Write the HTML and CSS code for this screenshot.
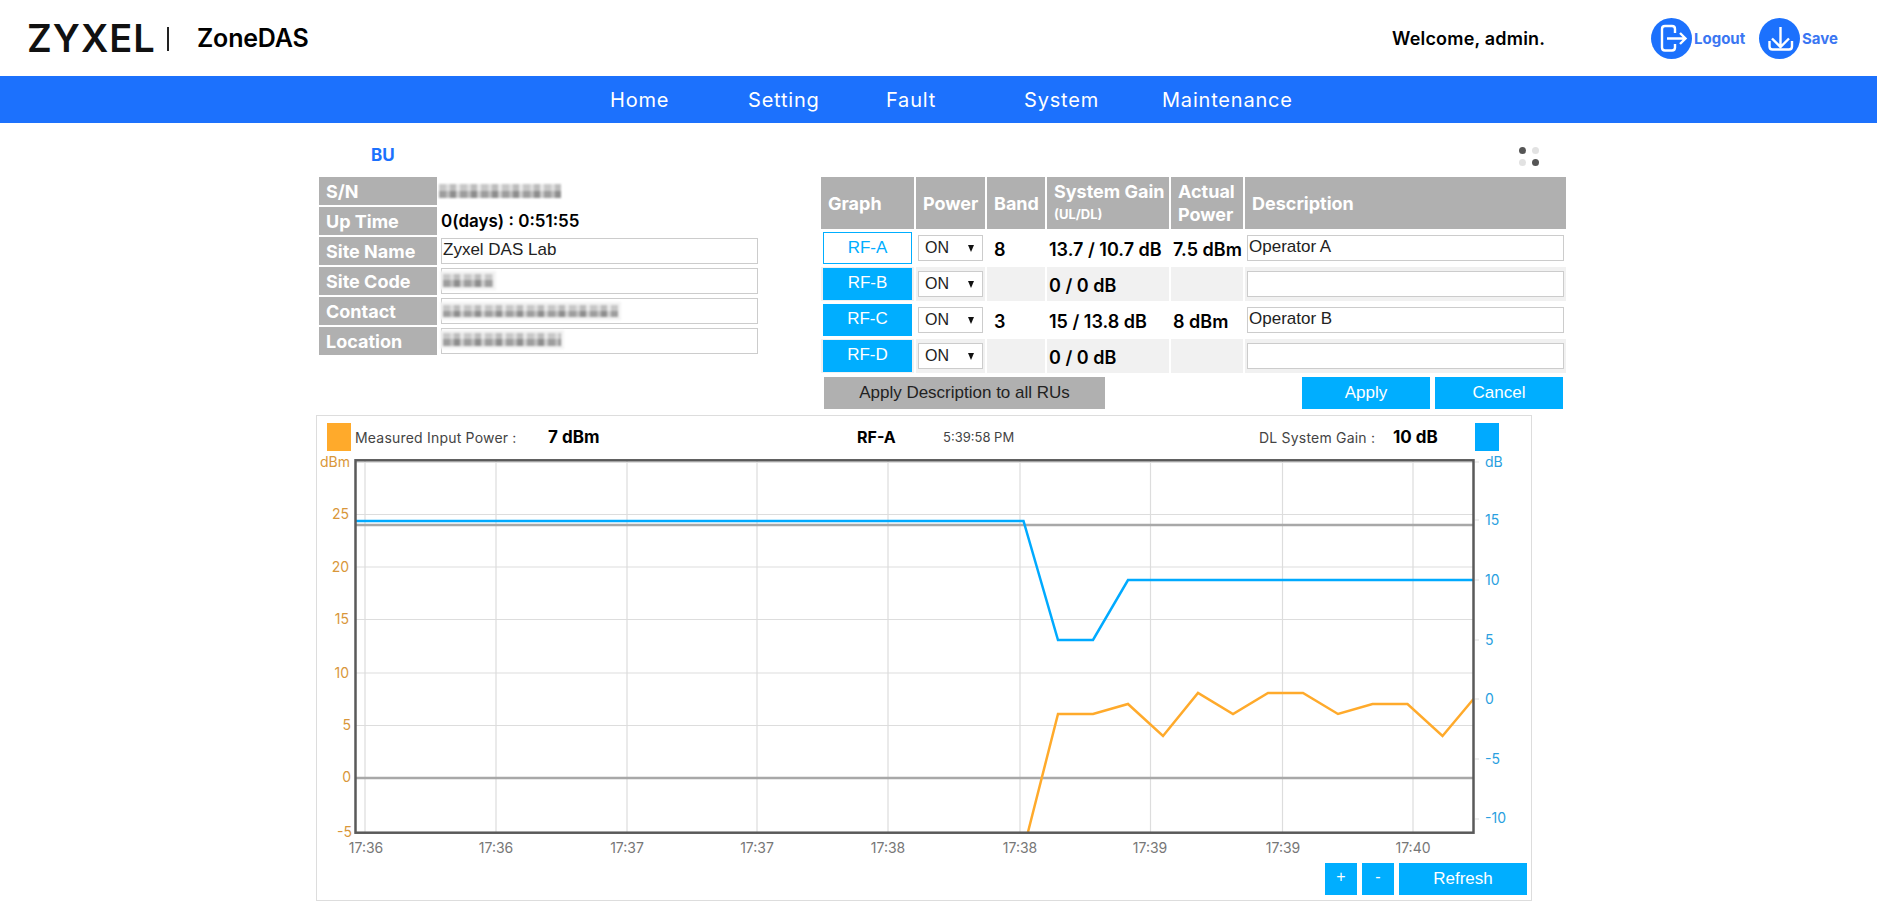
FILE: index.html
```html
<!DOCTYPE html>
<html lang="en">

<head>
    <meta charset="UTF-8">
    <title>ZoneDAS</title>
    <link rel="stylesheet" href="styles.css">
</head>

<body>
    <div class="top-header">
        <span class="logo-text">ZYXEL</span>
        <span class="logo-bar"></span>
        <span class="product-name">ZoneDAS</span>
        <span class="welcome">Welcome, admin.</span>
        <span class="head-icon">
            <svg width="41" height="41" viewBox="0 0 41 41">
                <circle cx="20.5" cy="20.5" r="20.5" fill="#1c71fd"/>
                <path d="M24 15V11q0-3-3-3H14q-3 0-3 3V29.500q0 3 3 3H21q3 0 3-3V26" fill="none" stroke="#fff" stroke-width="2.4"/>
                <path d="M16 20.500H34.500M29 15l5.500 5.500L29 26" fill="none" stroke="#fff" stroke-width="2.4"/>
            </svg>
        </span>
        <span class="head-link head-link-logout">Logout</span>
        <span class="head-icon">
            <svg width="41" height="41" viewBox="0 0 41 41">
                <circle cx="20.5" cy="20.500" r="20.5" fill="#1c71fd"/>
                <path d="M21.500 9V29M13 20.500l8.500 8.500 8.500-8.500" fill="none" stroke="#fff" stroke-width="2.4"/>
                <path d="M10.500 23v5.500q0 3 3 3H30q3 0 3-3V23" fill="none" stroke="#fff" stroke-width="2.4"/>
            </svg>
        </span>
        <span class="head-link">Save</span>
    </div>

    <div class="main-nav">
        <span class="nav-item">Home</span>
        <span class="nav-item">Setting</span>
        <span class="nav-item">Fault</span>
        <span class="nav-item">System</span>
        <span class="nav-item">Maintenance</span>
    </div>

    <div class="bu-title-row">
        <span class="bu-title">BU</span>
        <span class="dots">
            <i class="dot dot-dark"></i><i class="dot"></i>
            <i class="dot"></i><i class="dot dot-dark"></i>
        </span>
    </div>

    <div class="bu-top">
        <div class="info-list">
            <div class="info-row">
                <span class="info-label">S/N</span>
                <span class="mosaic mosaic-sn"></span>
            </div>
            <div class="info-row">
                <span class="info-label">Up Time</span>
                <span class="info-value">0(days) : 0:51:55</span>
            </div>
            <div class="info-row">
                <span class="info-label">Site Name</span>
                <span class="info-input">Zyxel DAS Lab</span>
            </div>
            <div class="info-row">
                <span class="info-label">Site Code</span>
                <span class="info-input"><span class="mosaic mosaic-code"></span></span>
            </div>
            <div class="info-row">
                <span class="info-label">Contact</span>
                <span class="info-input"><span class="mosaic mosaic-contact"></span></span>
            </div>
            <div class="info-row">
                <span class="info-label">Location</span>
                <span class="info-input"><span class="mosaic mosaic-location"></span></span>
            </div>
        </div>

        <div class="rf-panel">
            <table class="rf-table">
                <thead>
                    <tr>
                        <th class="col-graph">Graph</th>
                        <th class="col-power">Power</th>
                        <th class="col-band">Band</th>
                        <th class="col-gain">System Gain<small>(UL/DL)</small></th>
                        <th class="col-actual">Actual Power</th>
                        <th>Description</th>
                    </tr>
                </thead>
                <tbody>
                    <tr>
                        <td><span class="rf-btn rf-btn-active">RF-A</span></td>
                        <td><span class="power-select">ON<i class="caret"></i></span></td>
                        <td class="cell-text cell-band">8</td>
                        <td class="cell-text">13.7 / 10.7 dB</td>
                        <td class="cell-text">7.5 dBm</td>
                        <td><span class="desc-input">Operator A</span></td>
                    </tr>
                    <tr class="row-off">
                        <td><span class="rf-btn">RF-B</span></td>
                        <td><span class="power-select">ON<i class="caret"></i></span></td>
                        <td class="cell-text cell-band"></td>
                        <td class="cell-text">0 / 0 dB</td>
                        <td class="cell-text"></td>
                        <td><span class="desc-input"></span></td>
                    </tr>
                    <tr>
                        <td><span class="rf-btn">RF-C</span></td>
                        <td><span class="power-select">ON<i class="caret"></i></span></td>
                        <td class="cell-text cell-band">3</td>
                        <td class="cell-text">15 / 13.8 dB</td>
                        <td class="cell-text">8 dBm</td>
                        <td><span class="desc-input">Operator B</span></td>
                    </tr>
                    <tr class="row-off">
                        <td><span class="rf-btn">RF-D</span></td>
                        <td><span class="power-select">ON<i class="caret"></i></span></td>
                        <td class="cell-text cell-band"></td>
                        <td class="cell-text">0 / 0 dB</td>
                        <td class="cell-text"></td>
                        <td><span class="desc-input"></span></td>
                    </tr>
                </tbody>
            </table>
            <div class="rf-actions">
                <span class="btn btn-grey">Apply Description to all RUs</span>
                <span class="btn btn-apply">Apply</span>
                <span class="btn btn-apply">Cancel</span>
            </div>
        </div>
    </div>

    <div class="chart-card">
        <div class="legend-row">
            <i class="legend-square legend-orange"></i>
            <span class="legend-label legend-w-input">Measured Input Power :</span>
            <span class="legend-value legend-w-inval">7 dBm</span>
            <span class="legend-rf legend-w-rf">RF-A</span>
            <span class="legend-time legend-w-time">5:39:58 PM</span>
            <span class="legend-label legend-w-gain">DL System Gain :</span>
            <span class="legend-value legend-w-gainval">10 dB</span>
            <i class="legend-square legend-blue"></i>
        </div>

        <svg class="chart" width="1214" height="407" viewBox="317 450 1214 407">
            <g class="grid">
                <path d="M356 462.500H1473M356 514.500H1473M356 567H1473M356 619.500H1473M356 673H1473M356 725.500H1473"/>
                <path d="M365 460V832M496 460V832M627 460V832M757 460V832M888 460V832M1020 460V832M1150.500 460V832M1282.500 460V832M1413 460V832"/>
                <path d="M1475 462H1479M1475 520H1479M1475 580H1479M1475 640H1479M1475 699H1479M1475 759H1479M1475 819H1479"/>
            </g>
            <path class="ref-line" d="M356 525H1473M356 778H1473"/>
            <polyline class="line-blue" points="356,521 1023.500,521 1058,640 1093,640 1128,580 1473,580"/>
            <polyline class="line-orange" points="1028,832 1058,714 1093,714 1128,704 1163,736 1198,693 1233,714 1268,693 1303,693 1338,714 1372.500,704 1407.500,704 1442.500,736 1473.500,699"/>
            <rect class="frame" x="355.500" y="460.300" width="1118" height="372.400"/>

            <g class="axis-left">
                <text x="350" y="467">dBm</text>
                <text x="349" y="519">25</text>
                <text x="349" y="572">20</text>
                <text x="349" y="624">15</text>
                <text x="349" y="678">10</text>
                <text x="351" y="730">5</text>
                <text x="351" y="782">0</text>
                <text x="352" y="837">-5</text>
            </g>
            <g class="axis-right">
                <text x="1485" y="467">dB</text>
                <text x="1485" y="525">15</text>
                <text x="1485" y="585">10</text>
                <text x="1485" y="645">5</text>
                <text x="1485" y="704">0</text>
                <text x="1485" y="764">-5</text>
                <text x="1485" y="823">-10</text>
            </g>
            <g class="axis-bottom">
                <text x="366" y="853">17:36</text>
                <text x="496" y="853">17:36</text>
                <text x="627" y="853">17:37</text>
                <text x="757" y="853">17:37</text>
                <text x="888" y="853">17:38</text>
                <text x="1020" y="853">17:38</text>
                <text x="1150" y="853">17:39</text>
                <text x="1283" y="853">17:39</text>
                <text x="1413" y="853">17:40</text>
            </g>
        </svg>

        <div class="chart-actions">
            <span class="btn btn-apply btn-small">+</span>
            <span class="btn btn-apply btn-small">-</span>
            <span class="btn btn-apply">Refresh</span>
        </div>
    </div>
</body>

</html>
```
FILE: styles.css
```css
body {
    margin: 0;
    background: #fff;
    color: #000;
    font-family: Inter, "Open Sans", sans-serif;
}

.top-header {
    display: flex;
    align-items: center;
    height: 76px;
    padding-left: 27px;
}

.logo-text {
    width: 140px;
    font-size: 38px;
    font-weight: 600;
    letter-spacing: 1px;
    color: #111;
}

.logo-bar {
    width: 2px;
    height: 24px;
    margin-top: 2px;
    background: #222;
}

.product-name {
    width: 1195px;
    margin-left: 28px;
    font-size: 25px;
    font-weight: 600;
    letter-spacing: -0.2px;
}

.welcome {
    width: 259px;
    font-size: 18px;
    font-weight: 600;
    letter-spacing: 0.2px;
}

.head-icon {
    display: flex;
    width: 41px;
    height: 41px;
}

.head-link {
    margin-left: 2px;
    color: #3a76f2;
    font-size: 15px;
    font-weight: 700;
}

.head-link-logout {
    width: 65px;
}

.main-nav {
    display: flex;
    align-items: center;
    height: 47px;
    padding-left: 610px;
    background: #1c71fd;
}

.nav-item {
    width: 138px;
    color: #fff;
    font-size: 20px;
    letter-spacing: 0.8px;
}

.bu-title-row {
    display: flex;
    align-items: center;
    height: 52px;
}

.bu-title {
    width: 1148px;
    margin: 12px 0 0 371px;
    color: #1c71fd;
    font-size: 17px;
    font-weight: 700;
}

.dots {
    display: grid;
    grid-template-columns: 7px 7px;
    gap: 5px 6px;
    margin-top: 14px;
}

.dot {
    width: 7px;
    height: 7px;
    border-radius: 50%;
    background: #e2e2e2;
}

.dot-dark {
    background: #555;
}

.bu-top {
    display: flex;
    margin-left: 319px;
}

.info-list {
    display: flex;
    flex-direction: column;
    gap: 2px;
    width: 500px;
    padding-top: 2px;
}

.info-row {
    display: flex;
    align-items: center;
    height: 28px;
}

.info-label {
    width: 111px;
    height: 28px;
    padding-left: 7px;
    background: #b0b0b0;
    color: #fff;
    font-size: 18px;
    font-weight: 700;
    line-height: 30px;
    white-space: nowrap;
}

.info-value {
    margin-left: 4px;
    font-size: 17px;
    font-weight: 600;
}

.info-input {
    display: block;
    box-sizing: border-box;
    width: 317px;
    height: 26px;
    margin-left: 4px;
    padding-left: 1px;
    border: 1px solid #ccc;
    font-family: "Liberation Sans", sans-serif;
    font-size: 17px;
    line-height: 22px;
    color: #222;
}

/* blurred-out values */
.mosaic {
    display: block;
    filter: blur(1px);
    background-color: #eee;
    background-image: linear-gradient(rgba(255, 255, 255, 0.35) 0 50%, rgba(0, 0, 0, 0.08) 50% 100%), repeating-linear-gradient(90deg, #aaa 0 7px, #ccc 7px 11px, #999 11px 17px, #ddd 17px 21px);
    box-shadow: 0 0 0 3px #f3f3f3;
}

.mosaic-sn {
    width: 122px;
    height: 14px;
    margin-left: 2px;
    margin-top: -1px;
    box-shadow: none;
}

.mosaic-code {
    width: 50px;
    height: 13px;
    margin-top: 5px;
}

.mosaic-contact {
    width: 175px;
    height: 12px;
    margin-top: 6px;
}

.mosaic-location {
    width: 118px;
    height: 13px;
    margin-top: 4px;
}

.rf-panel {
    width: 749px;
}

.rf-table {
    width: 749px;
    border-collapse: separate;
    border-spacing: 2px;
    table-layout: fixed;
}

.rf-table th {
    height: 52px;
    padding: 0 0 0 7px;
    background: #b0b0b0;
    color: #fff;
    font-size: 18px;
    font-weight: 700;
    line-height: 23px;
    text-align: left;
    white-space: nowrap;
}

.rf-table .col-actual {
    white-space: normal;
}

.rf-table th small {
    display: block;
    font-size: 13px;
}

.rf-table .col-graph {
    width: 86px;
}

.rf-table .col-power {
    width: 62px;
}

.rf-table .col-band {
    width: 51px;
}

.rf-table .col-gain {
    width: 115px;
}

.rf-table .col-actual {
    width: 65px;
}

.rf-table td {
    height: 34px;
    padding: 0 2px;
}

.row-off td {
    background: #f1f1f1;
}

.rf-table .cell-text {
    padding-left: 2px;
    padding-top: 2px;
    height: 32px;
    font-size: 18px;
    font-weight: 600;
    white-space: nowrap;
}

.rf-table .cell-band {
    padding-left: 7px;
}

.rf-btn {
    display: block;
    height: 32px;
    background: #00aeff;
    color: #fff;
    font-family: "Liberation Sans", sans-serif;
    font-size: 17px;
    line-height: 30px;
    text-align: center;
}

.rf-btn-active {
    box-sizing: border-box;
    border: 1px solid #00aeff;
    background: #fff;
    color: #00aeff;
}

.power-select {
    display: flex;
    align-items: center;
    justify-content: space-between;
    box-sizing: border-box;
    height: 26px;
    padding: 0 8px 0 6px;
    border: 1px solid #ccc;
    background: #fff;
    font-family: "Liberation Sans", sans-serif;
    font-size: 16px;
    color: #222;
}

.caret {
    width: 0;
    height: 0;
    border-left: 3.5px solid transparent;
    border-right: 3.5px solid transparent;
    border-top: 7px solid #111;
}

.desc-input {
    display: block;
    box-sizing: border-box;
    height: 26px;
    padding-left: 1px;
    border: 1px solid #ccc;
    background: #fff;
    font-family: "Liberation Sans", sans-serif;
    font-size: 17px;
    line-height: 22px;
    color: #222;
}

.rf-actions {
    display: flex;
    gap: 5px;
    margin-top: 2px;
    padding: 0 5px;
}

.btn {
    display: block;
    height: 32px;
    font-family: "Liberation Sans", sans-serif;
    font-size: 17px;
    line-height: 31px;
    text-align: center;
}

.btn-grey {
    width: 281px;
    margin-right: 192px;
    background: #b0b0b0;
    color: #222;
}

.btn-apply {
    width: 128px;
    background: #00aeff;
    color: #fff;
}

.chart-card {
    box-sizing: border-box;
    width: 1216px;
    height: 486px;
    margin: 6px 0 0 316px;
    border: 1px solid #ddd;
}

.legend-row {
    display: flex;
    align-items: center;
    height: 28px;
    padding: 7px 32px 0 10px;
}

.legend-square {
    flex: none;
    width: 24px;
    height: 28px;
}

.legend-orange {
    margin-right: 4px;
    background: #ffaa2b;
}

.legend-blue {
    background: #00aaff;
}

.legend-label {
    flex: none;
    color: #444;
    font-size: 14px;
    letter-spacing: 0.2px;
    white-space: nowrap;
}

.legend-time {
    flex: none;
    color: #444;
    font-size: 13px;
    white-space: nowrap;
}

.legend-value {
    flex: none;
    font-size: 17px;
    font-weight: 700;
    white-space: nowrap;
}

.legend-rf {
    flex: none;
    font-size: 16px;
    font-weight: 700;
}

.legend-w-input {
    width: 193px;
}

.legend-w-inval {
    width: 309px;
}

.legend-w-rf {
    width: 86px;
}

.legend-w-time {
    width: 316px;
}

.legend-w-gain {
    width: 134px;
}

.legend-w-gainval {
    width: 82px;
}

.chart {
    display: block;
    margin-top: -1px;
}

.grid path {
    fill: none;
    stroke: #ddd;
    stroke-width: 1.2;
}

.ref-line {
    fill: none;
    stroke: #a8a8a8;
    stroke-width: 2.5;
}

.line-blue,
.line-orange {
    fill: none;
    stroke-width: 2.5;
}

.line-blue {
    stroke: #00aaff;
}

.line-orange {
    stroke: #ffaa2b;
}

.frame {
    fill: none;
    stroke: #5a5a5a;
    stroke-width: 2.5;
}

.axis-left text,
.axis-right text,
.axis-bottom text {
    font-size: 14px;
}

.axis-left text {
    fill: #d9973a;
    text-anchor: end;
}

.axis-right text {
    fill: #2a9fe0;
}

.axis-bottom text {
    fill: #777;
    text-anchor: middle;
}

.chart-actions {
    display: flex;
    justify-content: flex-end;
    gap: 5px;
    margin-top: 6px;
    padding-right: 4px;
}

.btn-small {
    width: 32px;
    font-size: 16px;
    line-height: 28px;
}
```
